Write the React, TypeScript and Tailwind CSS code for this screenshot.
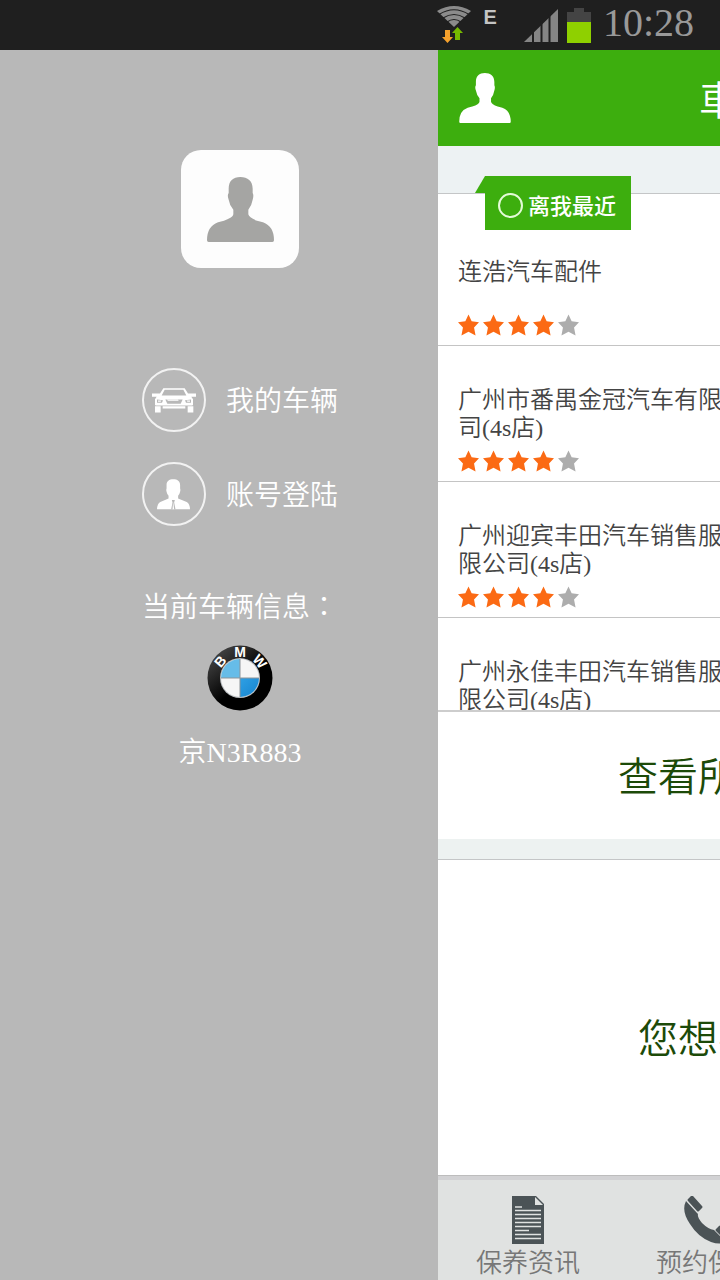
import React from 'react';

interface Shop {
  lines: string[];
  rating: number;
}

const shops: Shop[] = [
  { lines: ['连浩汽车配件'], rating: 4 },
  { lines: ['广州市番禺金冠汽车有限', '司(4s店)'], rating: 4 },
  { lines: ['广州迎宾丰田汽车销售服', '限公司(4s店)'], rating: 4 },
  { lines: ['广州永佳丰田汽车销售服', '限公司(4s店)'], rating: 4 },
];

const PersonIcon: React.FC<{ className: string }> = ({ className }) => (
  <svg viewBox="0 0 201 195" className={className} fill="currentColor" aria-hidden="true">
    <path d="M100 0C122 0 137 12 137 35V48Q141 55 137 68Q134 86 124 98V112Q126 122 150 131L168 136Q201 148 201 190Q201 195 196 195H5Q0 195 0 190Q0 148 33 136L51 131Q78 122 79 112V98Q68 86 65 68Q60 55 65 48V35C65 12 78 0 100 0Z" />
  </svg>
);

const SuitIcon = () => (
  <svg viewBox="0 0 100 92" className="h-[31px] w-[33px]" fill="currentColor" aria-hidden="true">
    <path d="M49 0C62 0 70 6 70 17V27Q72 32 70 38Q68 47 64 50V58L90 69Q99 73 100 91H0Q1 73 10 69L35 58V50Q31 47 29 38Q27 32 29 27V17C29 6 37 0 49 0Z" />
    <path d="M45 63H54L52 70L56 91H43L47 70Z" fill="#b8b8b8" />
    <path d="M49 68L52 91H47Z" />
  </svg>
);

const CarIcon = () => (
  <svg viewBox="0 0 132 74" className="h-[25px] w-11" fill="currentColor" aria-hidden="true">
    <path d="M34 0H98L108 16H132V26H118L123 33V50Q123 52 120 52H12Q9 52 9 50V33L14 26H0V16H24ZM38 5L29 22H103L94 5Z" fillRule="evenodd" />
    <path d="M9 54H26V73H9ZM107 54H124V73H107ZM32 54H100V61H32Z" />
    <path d="M40 34H92L86 47H46ZM15 34L33 36L30 44H15ZM117 34L99 36L102 44H117Z" fill="#b8b8b8" />
    <path d="M44 34H78L80 38H48ZM18 37H28L26 41H18ZM114 37H104L106 41H114Z" />
  </svg>
);

const BmwLogo = () => (
  <svg viewBox="0 0 66 66" className="size-[66px]" role="img" aria-label="BMW">
    <defs>
      <linearGradient id="ring" x1="0" y1="0" x2="0.5" y2="0.6">
        <stop offset="0" stopColor="#555" />
        <stop offset="1" stopColor="#000" />
      </linearGradient>
      <linearGradient id="sky" x1="0" y1="0" x2="1" y2="1">
        <stop offset="0" stopColor="#2fa0e4" />
        <stop offset="1" stopColor="#1583cf" />
      </linearGradient>
    </defs>
    <circle cx="33" cy="33" r="32.5" fill="url(#ring)" />
    <circle cx="33" cy="33" r="20" fill="#b9bdc0" />
    <circle cx="33" cy="33" r="19" fill="#f6f6f6" />
    <path d="M33 33V14A19 19 0 0 0 14 33Z" fill="#66bce8" />
    <path d="M33 33V52A19 19 0 0 0 52 33Z" fill="url(#sky)" />
    <path d="M33 14V52M14 33H52" stroke="#8d9499" strokeWidth="1" />
    <g fill="#fff" fontFamily="Liberation Sans" fontWeight="700" fontSize="14" textAnchor="middle">
      <text x="33" y="12">M</text>
      <text x="33" y="12" transform="rotate(-50 33 33)">B</text>
      <text x="33" y="12" transform="rotate(50 33 33)">W</text>
    </g>
  </svg>
);

const WifiIcon = () => (
  <svg viewBox="0 0 34 38" className="h-[38px] w-[34px]" aria-hidden="true">
    <path d="M17 21L0 5Q17 -5 34 5Z" fill="#8b8b8b" />
    <path d="M2 8.500Q17 -1 32 8.500M6 12Q17 5 28 12M10 16Q17 11 24 16" fill="none" stroke="#1f1f1f" strokeWidth="1.200" />
    <path d="M8 24H13V31H16L10.500 37L5 31H8Z" fill="#f5a12c" />
    <path d="M18 34H23V27H26L20.500 21L15 27H18Z" fill="#76b900" />
  </svg>
);

const SignalIcon = () => (
  <svg viewBox="0 0 34 33" className="h-[33px] w-[34px]" aria-hidden="true">
    <path d="M0 33L34 0V33Z" fill="#858585" />
    <path d="M9 20V33M17.500 12V33M25.500 5V33" stroke="#1f1f1f" strokeWidth="2" />
  </svg>
);

const BatteryIcon = () => (
  <svg viewBox="0 0 24 35" className="h-[35px] w-6" aria-hidden="true">
    <path d="M7 0H17V4H24V14H0V4H7Z" fill="#444" />
    <path d="M0 14H24V35H0Z" fill="#8fd000" />
  </svg>
);

const Stars: React.FC<{ rating: number }> = ({ rating }) => (
  <div className="flex gap-1" role="img" aria-label={`${rating} / 5`}>
    {[1, 2, 3, 4, 5].map((n) => (
      <svg
        key={n}
        viewBox="0 0 22 22"
        className={n <= rating ? 'h-[22px] w-[21px] text-[#fb6a14]' : 'h-[22px] w-[21px] text-[#adadad]'}
        fill="currentColor"
      >
        <path d="M11 0L14.300 7L22 8L16.800 13.600L18.400 22L11 18.200L3.600 22L5.200 13.600L0 8L7.700 7Z" />
      </svg>
    ))}
  </div>
);

const DocIcon = () => (
  <svg viewBox="0 0 32 48" className="h-12 w-8" aria-hidden="true">
    <path d="M0 0H24L32 8V48H0Z" fill="#4b5356" />
    <path d="M23 1V9H31Z" fill="#e0e2e1" />
    <path d="M3 11H10M3 14.500H29M3 18.500H29M3 22.500H29M3 26.500H29M3 30.500H29M3 34.500H17M3 38.500H29M3 42.500H29" stroke="#e0e2e1" strokeWidth="1.500" />
  </svg>
);

const PhoneIcon = () => (
  <svg viewBox="0 0 48 48" className="size-12" fill="#4b5356" aria-hidden="true">
    <path d="M4 3L7 0Q8 -1 9 0L18 10Q19 11 18 12L15 15Q14 16 13 15L4 5Q3 4 4 3Z" />
    <path d="M2 5L13 17L14 18Q13 21 18 27Q24 33 30 34L42 46Q36 49 27 46Q14 41 6 28Q-3 15 2 5Z" />
    <path d="M35 30Q36 29 37 30L47 39Q48 40 47 41L44 45Q43 46 42 45L32 35Q31 34 32 33Z" />
  </svg>
);

const App: React.FC = () => {
  return (
    <div className="flex min-h-screen flex-col overflow-hidden bg-[#b8b8b8] font-['Liberation_Serif','Noto_Sans_CJK_SC',serif] font-[350]">
      {/* Status bar */}
      <div className="flex h-[50px] items-center justify-end bg-[#1f1f1f] pr-[26px] text-[#999]">
        <WifiIcon />
        <span className="mb-4 ml-[13px] font-['Liberation_Sans',sans-serif] text-xl leading-5 font-bold text-[#c4c4c4]">E</span>
        <div className="ml-[27px] flex items-center gap-[9px]">
          <SignalIcon />
          <BatteryIcon />
        </div>
        <span className="mb-1 ml-3 text-[40px] leading-10">10:28</span>
      </div>

      <div className="flex flex-1">
        {/* Drawer */}
        <aside className="flex w-[438px] shrink-0 flex-col items-center pt-[100px] pl-[42px] text-[28px] leading-8 text-white">
          <button aria-label="头像" className="flex size-[118px] items-center justify-center rounded-[20px] bg-[#fdfdfd]">
            <PersonIcon className="h-[65px] w-[67px] text-[#a5a5a3]" />
          </button>

          <nav className="mt-[100px] flex flex-col gap-[30px]">
            <a href="#cars" className="flex items-center gap-5">
              <span className="flex size-16 items-center justify-center rounded-full border-2 border-[#f2f2f2]">
                <CarIcon />
              </span>
              <span className="pt-1">我的车辆</span>
            </a>
            <a href="#login" className="flex items-center gap-5">
              <span className="flex size-16 items-center justify-center rounded-full border-2 border-[#f2f2f2]">
                <SuitIcon />
              </span>
              <span className="pt-1">账号登陆</span>
            </a>
          </nav>

          <p className="mt-[63px] font-['Noto_Sans_CJK_TC',sans-serif]">当前车辆信息：</p>
          <div className="mt-6">
            <BmwLogo />
          </div>
          <p className="mt-[26px]">京N3R883</p>
        </aside>

        {/* Main page, pushed to the right by the drawer */}
        <main className="flex min-w-0 flex-1 flex-col overflow-hidden bg-white whitespace-nowrap">
          <header className="flex h-24 items-center bg-[#3dae0e] pl-[21px] text-white">
            <button aria-label="菜单" className="shrink-0">
              <PersonIcon className="h-[50px] w-[52px]" />
            </button>
            <h1 className="ml-[188px] pt-2 text-[40px] leading-10">車</h1>
          </header>

          <div className="relative h-12 shrink-0 border-b border-[#c4c6c7] bg-[#edf2f3]">
            <label className="absolute top-[30px] left-[47px] flex h-[54px] w-[146px] items-center gap-[5px] bg-[#3dae0e] pt-1 pl-[13px] text-[22px] leading-7 font-medium text-white">
              <svg viewBox="0 0 10 17" className="absolute top-0 -left-[10px] h-[17px] w-[10px]" aria-hidden="true">
                <path d="M10 0V17H0Z" fill="#3dae0e" />
              </svg>
              <input type="radio" name="sort" className="size-[25px] shrink-0 appearance-none rounded-full border-2 border-[#e4fbd8]" />
              <span className="pt-1">离我最近</span>
            </label>
          </div>

          <ul className="h-[516px] shrink-0 overflow-hidden">
            {shops.map((shop, i) => (
              <li
                key={shop.lines[0]}
                className={
                  i === 0
                    ? 'flex flex-col gap-7 border-b border-[#c4c4c4] px-5 pt-16 pb-[9px]'
                    : 'flex flex-col gap-2 border-b border-[#c4c4c4] px-5 pt-10 pb-[9px]'
                }
              >
                <a href="#shop" className="text-2xl leading-7 text-[#444]">
                  {shop.lines.map((line) => (
                    <span key={line} className="block">
                      {line}
                    </span>
                  ))}
                </a>
                <Stars rating={shop.rating} />
              </li>
            ))}
          </ul>

          <a href="#all" className="flex h-[129px] shrink-0 items-center border-t-2 border-[#cdcdcd] pt-1 pl-[180px] text-[40px] leading-10 text-[#1c4a08]">
            查看所
          </a>
          <div className="h-[21px] shrink-0 border-b border-[#c4c6c7] bg-[#edf2f1]" />
          <a href="#want" className="flex min-h-[315px] flex-1 items-center pt-11 pl-[200px] text-[40px] leading-10 text-[#1c4a08]">
            您想要
          </a>

          {/* Tab bar */}
          <nav className="flex border-t border-[#bdbdbd] bg-[#e0e2e1] text-[26px] leading-8 text-[#777]">
            <button className="flex w-[180px] shrink-0 flex-col items-center gap-1 border-t-4 border-[#d2d2d4] pt-4">
              <DocIcon />
              保养资讯
            </button>
            <button className="flex w-[180px] shrink-0 flex-col items-center gap-1 border-t-4 border-[#d2d2d4] pt-4">
              <PhoneIcon />
              预约保养
            </button>
          </nav>
        </main>
      </div>
    </div>
  );
};

export default App;
